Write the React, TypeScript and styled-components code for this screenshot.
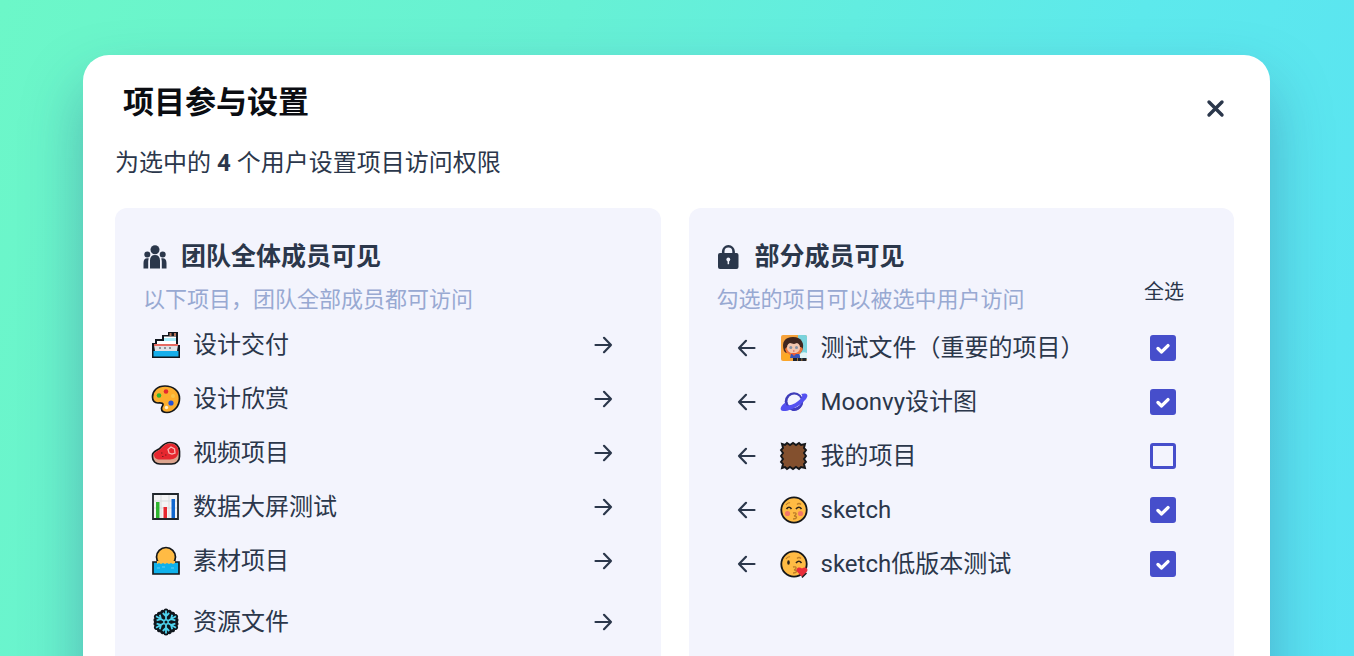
import React from 'react';
import styled, { createGlobalStyle } from 'styled-components';

const Global = createGlobalStyle`
  *, *::before, *::after { box-sizing: border-box; }
  html, body, #root { height: 100%; }
  body {
    margin: 0;
    overflow: hidden;
    color: #2b374b;
    font-family: Roboto, "Noto Sans CJK SC", sans-serif;
  }
  button { font: inherit; color: inherit; }
`;

const Page = styled.main`
  height: 100%;
  padding: 55px 84px 0 83px;
  overflow: hidden;
  background: linear-gradient(110deg, #6cf7c8 0%, #67f1d4 36%, #5de9ec 72%, #59e2f3 100%);
`;

const Dialog = styled.section`
  min-height: 900px;
  padding: 25px 36px 32px 32px;
  border-radius: 26px;
  background: #fff;
  box-shadow: 0 30px 60px rgba(40, 70, 130, 0.35);
`;

const DialogHeader = styled.header`
  display: flex;
  justify-content: space-between;
  align-items: flex-start;
  padding-left: 8px;
`;

const Title = styled.h1`
  margin: 0;
  font-size: 31px;
  line-height: 46px;
  font-weight: 700;
  color: #0b0d12;
`;

const IconButton = styled.button`
  display: flex;
  align-items: center;
  justify-content: center;
  width: 36px;
  height: 36px;
  padding: 0;
  border: 0;
  background: none;
  cursor: pointer;
`;

const CloseButton = styled(IconButton)`
  margin-top: 11px;
`;

const Lead = styled.p`
  margin: 19px 0 28px;
  font-size: 24px;
  line-height: 34px;
`;

const Panels = styled.div`
  display: grid;
  grid-template-columns: 1fr 1fr;
  gap: 28px;
`;

const Panel = styled.section`
  min-height: 600px;
  padding: 28px;
  border-radius: 12px;
  background: #f3f4fd;
`;

const PanelTitle = styled.h2`
  display: flex;
  align-items: center;
  gap: 14px;
  margin: 0 0 4px;
  font-size: 25px;
  line-height: 42px;
  font-weight: 700;
`;

const PanelBar = styled.div`
  display: flex;
  justify-content: space-between;
  padding-right: 22px;
`;

const Hint = styled.p`
  margin: 0;
  font-size: 22px;
  line-height: 36px;
  color: #98a9d2;
`;

const SelectAll = styled.button`
  padding: 0;
  border: 0;
  background: none;
  font-size: 20px;
  line-height: 20px;
  height: 20px;
  cursor: pointer;
`;

const List = styled.ul<{ $inset?: boolean }>`
  margin: 0;
  padding: ${(p) => (p.$inset ? '3px 30px 0 12px' : '0 12px 0 8px')};
  list-style: none;
`;

const Row = styled.li<{ $tall?: boolean }>`
  display: flex;
  align-items: center;
  height: 54px;
  margin-top: ${(p) => (p.$tall ? '7px' : '0')};
`;

const Emblem = styled.svg`
  flex: none;
  width: 30px;
  height: 30px;
  margin-right: 12px;
`;

const Name = styled.span`
  flex: 1;
  font-size: 24px;
  line-height: 36px;
`;

const NameLabel = styled(Name).attrs({ as: 'label' })<{ htmlFor?: string }>``;

const BackButton = styled(IconButton)`
  margin-right: 14px;
`;

const Tick = styled.input`
  appearance: none;
  width: 26px;
  height: 26px;
  margin: 0;
  border: 3px solid #464ecb;
  border-radius: 3px;
  background: transparent;
  cursor: pointer;
  &:checked {
    background: #464ecb url("data:image/svg+xml,%3Csvg xmlns='http://www.w3.org/2000/svg' viewBox='0 0 20 20' fill='none' stroke='white' stroke-width='3.4' stroke-linecap='round' stroke-linejoin='round'%3E%3Cpath d='M5 10.5l3.6 3.4L15 7.6'/%3E%3C/svg%3E") center / 20px 20px no-repeat;
  }
`;

const Arrow = ({ left }: { left?: boolean }) => (
  <svg width="20" height="20" viewBox="0 0 20 20" fill="none" stroke="#2b374b" strokeWidth="2.2" strokeLinecap="round" strokeLinejoin="round" aria-hidden="true">
    <path d={left ? 'M17.500 10H2M9 2.800L2 10l7 7.200' : 'M2.500 10h15.500M11 2.800L18 10l-7 7.200'} />
  </svg>
);

const CloseIcon = () => (
  <svg width="20" height="20" viewBox="0 0 20 20" stroke="#2b374b" strokeWidth="3.4" strokeLinecap="round" aria-hidden="true">
    <path d="M3 3l13 13M16 3l-13 13" />
  </svg>
);

const PeopleIcon = () => (
  <svg width="24" height="24" viewBox="0 0 24 24" fill="#2b374b" aria-hidden="true">
    <circle cx="12" cy="4.700" r="4.500" />
    <circle cx="4.300" cy="9.500" r="3" />
    <circle cx="19.700" cy="9.500" r="3" />
    <path d="M7 23.500v-8c0-3.500 1.700-5.500 5-5.500s5 2 5 5.500v8zM0.500 23.500V18c0-3 1.200-4.800 3.800-4.800.6 0 1 .1 1.500.3-.4 1-.6 2-.6 3.200v6.800zM23.500 23.500V18c0-3-1.200-4.800-3.800-4.800-.6 0-1 .1-1.500.3.4 1 .6 2 .6 3.200v6.800z" />
  </svg>
);

const LockIcon = () => (
  <svg width="24" height="24" viewBox="0 0 24 24" aria-hidden="true">
    <path d="M6.200 10V6.500a5.200 5.200 0 0 1 10.400 0V10" fill="none" stroke="#2b374b" strokeWidth="2.600" />
    <rect x="1" y="8" width="20.500" height="16" rx="2" fill="#2b374b" />
    <circle cx="11.300" cy="14.500" r="1.900" fill="#f3f4fd" />
    <path d="M10.600 15h1.500v4.200h-1.500z" fill="#f3f4fd" />
  </svg>
);

const Ship = () => (
  <>
    <path d="M1 13h3V9h7V5h6V2h10v13h2v13H1z" fill="#10161d" />
    <path d="M18.500 3h2v3h-2zM23 3h2v3h-2z" fill="#b5745a" />
    <path d="M13 6.500h12V8H13z" fill="#fff" />
    <path d="M13 8h12v3H13z" fill="#a9edfa" />
    <path d="M6 11h6v3H6zM12 11h13v3H12z" fill="#fff" />
    <path d="M3 15h24l-1 6H4z" fill="#dfe2e5" />
    <path d="M3 14h24v2H3z" fill="#e66b62" />
    <path d="M8 17h2v2H8zM13 17h2v2h-2zM18 17h2v2h-2z" fill="#8c9299" />
    <path d="M2.500 21h25v5.500h-25z" fill="#15aeeb" />
  </>
);

const Palette = () => (
  <>
    <path d="M14 2c8 0 14.500 5 14.500 12.500S23 28.500 16 28.500c-4 0-5.500-2-5.500-4 0-2 2-3 1.500-4.500-.5-1.500-3-1-5-1-3.500 0-5.500-2-5.500-6C1.500 7 6 2 14 2z" fill="#fcae2d" stroke="#15171a" strokeWidth="1.700" />
    <circle cx="8" cy="11.500" r="2.300" fill="#2fb62f" />
    <circle cx="15" cy="7.500" r="2.300" fill="#e6272f" />
    <circle cx="22" cy="12" r="2" fill="#f8c34a" />
    <circle cx="20" cy="19" r="2.600" fill="#2450d8" />
    <circle cx="15.500" cy="23.500" r="1.700" fill="#fff2cc" />
  </>
);

const Steak = () => (
  <>
    <path d="M1.500 17c0-3 3.500-4 6.500-6 3-2.500 5-6.500 11-6.500s9.500 4 9.500 9v5c0 4-3 7.500-8 7.500H9c-4.500 0-7.500-3-7.500-7z" fill="#dda58f" stroke="#15171a" strokeWidth="1.700" />
    <path d="M3 16.500c0-2 3-3 6-5 3-2.500 5-6 10-6s8.500 3 8.500 8c0 5-4 8-8.500 8H9c-4 0-6-2-6-5z" fill="#e6272f" />
    <path d="M17 11.500l3-2.500 3.500 2 .5 4-3 1-3-1z" fill="none" stroke="#f9b3b0" strokeWidth="1.300" />
    <path d="M10 15h1.500M14 17h1.500M11 18.500h1.500" stroke="#761c20" />
  </>
);

const Chart = () => (
  <>
    <path d="M2 2h25v25H2z" fill="#f4f4f5" stroke="#20262b" strokeWidth="1.800" />
    <path d="M3 9h23M3 16h23M10 3v23M18 3v23" stroke="#d9dcde" />
    <path d="M5 10h3.500v16H5z" fill="#2fb62f" />
    <path d="M12.500 15H16v11h-3.500z" fill="#e6272f" />
    <path d="M20.500 7H24v19h-3.500z" fill="#1268cf" />
  </>
);

const Sunrise = () => (
  <>
    <circle cx="15" cy="11" r="9.500" fill="#ffbb44" stroke="#15171a" strokeWidth="1.700" />
    <path d="M2 16h26v12H2z" fill="#0fb1eb" stroke="#15171a" strokeWidth="1.700" />
    <path d="M6 15h18v2l-2 1-2-1-2 1-2-1-2 1-2-1-2 1-2-1-2 1z" fill="#ffbb44" />
    <path d="M6 22h3M20 22h3M11 21h3" stroke="#60cef2" />
  </>
);

const flake = [0, 60, 120, 180, 240, 300];

const Snow = () => (
  <g fill="none">
    <circle cx="15" cy="15" r="10" fill="#10161d" />
    {flake.map((a) => (
      <path key={a} d="M15 13V4M11.500 5.500L15 9l3.500-3.500" stroke="#10161d" strokeWidth="5" strokeLinecap="round" transform={`rotate(${a} 15 15)`} />
    ))}
    {flake.map((a) => (
      <path key={a} d="M15 12.500V3.500M11.800 6L15 9.200 18.200 6" stroke="#4fd3ee" strokeWidth="1.800" transform={`rotate(${a} 15 15)`} />
    ))}
    <circle cx="15" cy="15" r="2.200" stroke="#4fd3ee" strokeWidth="1.400" />
  </g>
);

const Portrait = () => (
  <>
    <rect x="2" y="2" width="26" height="26" rx="2" fill="#f6a33c" />
    <path d="M19 2h7q2 0 2 2v22h-9z" fill="#7bd3dc" />
    <path d="M5 18C2 9 6 4 14 4c9 0 12 7 9 14l-3 3H8z" fill="#40261f" />
    <path d="M6 16l2 5 5 2 8-2 3-5-2-2H8z" fill="#ef7538" />
    <ellipse cx="14.500" cy="14.500" rx="6.600" ry="6" fill="#f3c6ae" />
    <path d="M7 12c1-4 3-6 7-6 5 0 7 2 8 6l-4-2-3 1-4-1z" fill="#40261f" />
    <circle cx="11.800" cy="14.500" r="1.500" fill="#8391a5" />
    <circle cx="17.500" cy="14.500" r="1.500" fill="#8391a5" />
    <path d="M14 18h1.500" stroke="#c14b46" />
    <path d="M12 21h8l2 4H11z" fill="#3854b8" />
    <path d="M12 20l3 3 3-3" fill="#ed5c35" />
    <circle cx="7" cy="24" r="4" fill="#fda924" />
    <path d="M21 21q3-3 7-1v5h-7z" fill="#e1f4f5" />
    <path d="M14 26.500h14" stroke="#20242d" strokeWidth="3" strokeDasharray="4 0.600" />
  </>
);

const Planet = () => (
  <>
    <circle cx="15" cy="14.500" r="9.300" fill="#3e3cb9" />
    <circle cx="15.300" cy="14.300" r="6.800" fill="#f3f4fd" />
    <path d="M6.500 15.500c-4 2.500-5.500 5.500-4.500 7.500 2 3 12-.5 18.500-5 6-4.200 9-8.500 7.500-10.500-1-1.500-3.500-1.200-6-.5 1.500 1 1.800 2.500 0 4.500-3.500 3.500-8 6.500-13 7-2 .2-2.800-1-2.500-3z" fill="#5451f1" />
    <path d="M12 22.500c4-1 8.500-3.500 11.500-6C22.500 21 19 24 15 24c-1.500 0-2.300-.5-3-1.500z" fill="#403dc0" />
  </>
);

const Patch = () => (
  <path d="M3 3l3 1 2-2 3 2 3-2 3 2 3-2 2 2 4-1-1 4 2 2-2 3 2 3-2 3 2 3-2 2 1 4-4-1-2 2-3-2-3 2-3-2-3 2-2-2-3 1 1-4-2-2 2-3-2-3 2-3-2-3 2-2z" fill="#83502e" stroke="#15171a" strokeWidth="1.900" />
);

const Face = ({ heart }: { heart?: boolean }) => (
  <>
    <circle cx="15" cy="15" r="12.700" fill="#ffbb44" stroke="#15171a" strokeWidth="1.800" />
    <path d="M17 14q3-3.500 5.500 0" fill="none" stroke="#32251a" strokeWidth="1.700" />
    <path d="M18 9.500q2-2 4 0M7 10q2-3 4-2" fill="none" stroke="#bd7e28" strokeWidth="1.200" />
    <path d="M14 18c4-1 4 2 1 3 4 0 3 3-1 3" fill="none" stroke="#bd7e28" strokeWidth="1.300" />
    {heart ? (
      <>
        <ellipse cx="9.500" cy="13.500" rx="1.300" ry="2.200" fill="#2b2118" />
        <path d="M23 28l-5-5.500c-2-3.500 2.500-5.500 5-3 2.500-2.500 7-.5 5 3z" fill="#e92e3a" />
        <path d="M23 28.500l4.500-4.500" stroke="#15171a" strokeWidth="1.500" />
      </>
    ) : (
      <>
        <path d="M7.500 14q2.500-3.500 5 0" fill="none" stroke="#32251a" strokeWidth="1.700" />
        <circle cx="8.500" cy="18.500" r="2.600" fill="#f27867" />
        <circle cx="21.500" cy="18.500" r="2.600" fill="#f27867" />
      </>
    )}
  </>
);

const openProjects = [
  { name: '设计交付', art: <Ship /> },
  { name: '设计欣赏', art: <Palette /> },
  { name: '视频项目', art: <Steak /> },
  { name: '数据大屏测试', art: <Chart /> },
  { name: '素材项目', art: <Sunrise /> },
  { name: '资源文件', art: <Snow />, tall: true },
];

const limitedProjects = [
  { name: '测试文件（重要的项目）', art: <Portrait />, on: true },
  { name: 'Moonvy设计图', art: <Planet />, on: true },
  { name: '我的项目', art: <Patch />, on: false },
  { name: 'sketch', art: <Face />, on: true },
  { name: 'sketch低版本测试', art: <Face heart />, on: true },
];

export default function App() {
  return (
    <Page>
      <Global />
      <Dialog role="dialog" aria-labelledby="dialog-title">
        <DialogHeader>
          <Title id="dialog-title">项目参与设置</Title>
          <CloseButton type="button" aria-label="关闭"><CloseIcon /></CloseButton>
        </DialogHeader>
        <Lead>为选中的 <strong>4</strong> 个用户设置项目访问权限</Lead>
        <Panels>
          <Panel>
            <PanelTitle><PeopleIcon />团队全体成员可见</PanelTitle>
            <Hint>以下项目，团队全部成员都可访问</Hint>
            <List>
              {openProjects.map((p) => (
                <Row key={p.name} $tall={p.tall}>
                  <Emblem viewBox="0 0 30 30" aria-hidden="true">{p.art}</Emblem>
                  <Name>{p.name}</Name>
                  <IconButton type="button" aria-label={`移动 ${p.name}`}><Arrow /></IconButton>
                </Row>
              ))}
            </List>
          </Panel>
          <Panel>
            <PanelTitle><LockIcon />部分成员可见</PanelTitle>
            <PanelBar>
              <Hint>勾选的项目可以被选中用户访问</Hint>
              <SelectAll type="button">全选</SelectAll>
            </PanelBar>
            <List $inset>
              {limitedProjects.map((p, i) => (
                <Row key={p.name}>
                  <BackButton type="button" aria-label={`移回 ${p.name}`}><Arrow left /></BackButton>
                  <Emblem viewBox="0 0 30 30" aria-hidden="true">{p.art}</Emblem>
                  <NameLabel htmlFor={`project-${i}`}>{p.name}</NameLabel>
                  <Tick id={`project-${i}`} type="checkbox" defaultChecked={p.on} />
                </Row>
              ))}
            </List>
          </Panel>
        </Panels>
      </Dialog>
    </Page>
  );
}
